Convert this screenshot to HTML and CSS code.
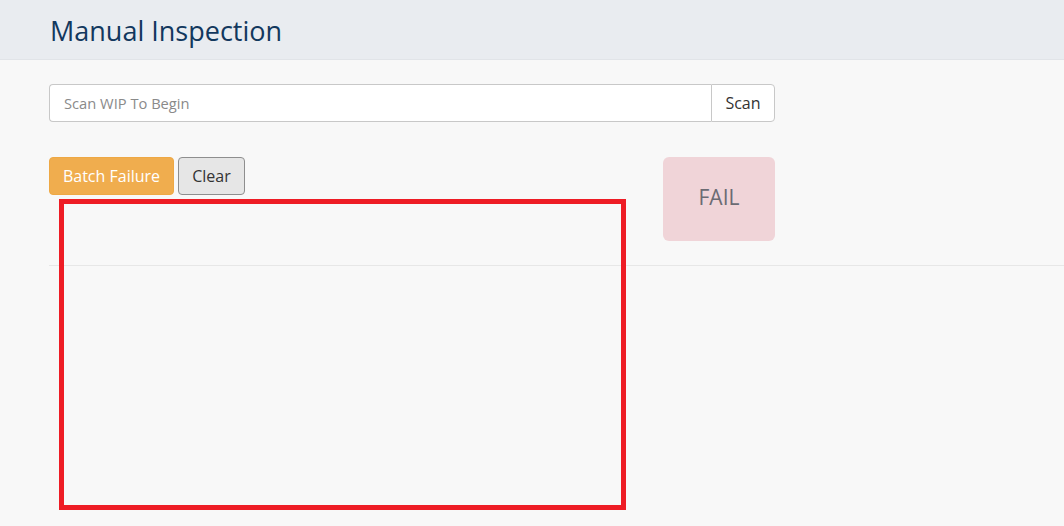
FILE: index.html
```html
<!DOCTYPE html>
<html>
<head>
<meta charset="utf-8">
<link rel="stylesheet" href="styles.css">
</head>
<body>
<header class="page-header">
  <h1 class="title">Manual Inspection</h1>
</header>
<main class="content">
  <div class="input-group">
    <input class="scan-input" type="text" placeholder="Scan WIP To Begin">
    <button class="scan-btn">Scan</button>
  </div>
  <div class="action-row">
    <div class="buttons">
      <button class="btn btn-warning">Batch Failure</button>
      <button class="btn btn-default">Clear</button>
    </div>
    <div class="result fail">FAIL</div>
  </div>
  <hr class="divider">
</main>
<div class="highlight-box"></div>
</body>
</html>
```

FILE: styles.css
```css
* { box-sizing: border-box; }
html, body { margin: 0; padding: 0; }
body {
  background: #f8f8f8;
  font-family: "Open Sans", "Liberation Sans", sans-serif;
  width: 1064px;
  height: 526px;
  overflow: hidden;
  position: relative;
}
.page-header {
  background: #e9ecf0;
  height: 60px;
  border-bottom: 1px solid #e1e4e8;
  padding-left: 50px;
  display: flex;
  align-items: center;
}
.title {
  margin: 0;
  font-weight: 400;
  font-size: 27px;
  color: #12385e;
  line-height: 1;
  position: relative;
  top: 1px;
}
.content {
  padding: 24px 0 0 49px;
}
.input-group {
  display: flex;
  width: 726px;
  height: 38px;
}
.scan-input {
  flex: 1;
  border: 1px solid #c8c8c8;
  border-right: none;
  border-radius: 4px 0 0 4px;
  background: #fff;
  font-family: inherit;
  font-size: 14.7px;
  padding: 0 14px;
  color: #555;
  outline: none;
}
.scan-input::placeholder { color: #8a8a8a; }
.scan-btn {
  width: 64px;
  border: 1px solid #c8c8c8;
  border-radius: 0 4px 4px 0;
  background: #fff;
  font-family: inherit;
  font-size: 16px;
  color: #333;
  padding: 0;
}
.action-row {
  display: flex;
  justify-content: space-between;
  align-items: flex-start;
  width: 726px;
  margin-top: 35px;
}
.buttons { display: flex; gap: 4px; }
.btn {
  height: 38px;
  border-radius: 4px;
  font-family: inherit;
  font-size: 16px;
  padding: 0;
}
.btn-warning {
  background: #f0ad4e;
  border: 1px solid #eea844;
  color: #fff;
  width: 125px;
}
.btn-default {
  background: #e6e6e6;
  border: 1px solid #8e8e8e;
  color: #333;
  width: 67px;
}
.result {
  width: 112px;
  height: 84px;
  border-radius: 6px;
  display: flex;
  align-items: center;
  justify-content: center;
  font-size: 21px;
  color: #6b6b73;
  padding-bottom: 5px;
}
.fail { background: #f0d4d8; }
.divider {
  border: none;
  border-top: 1px solid #e7e7e7;
  margin: 24px 0 0 0;
}
.highlight-box {
  position: absolute;
  left: 59px;
  top: 199px;
  width: 567px;
  height: 311px;
  border: 5px solid #ee1c25;
}
```
